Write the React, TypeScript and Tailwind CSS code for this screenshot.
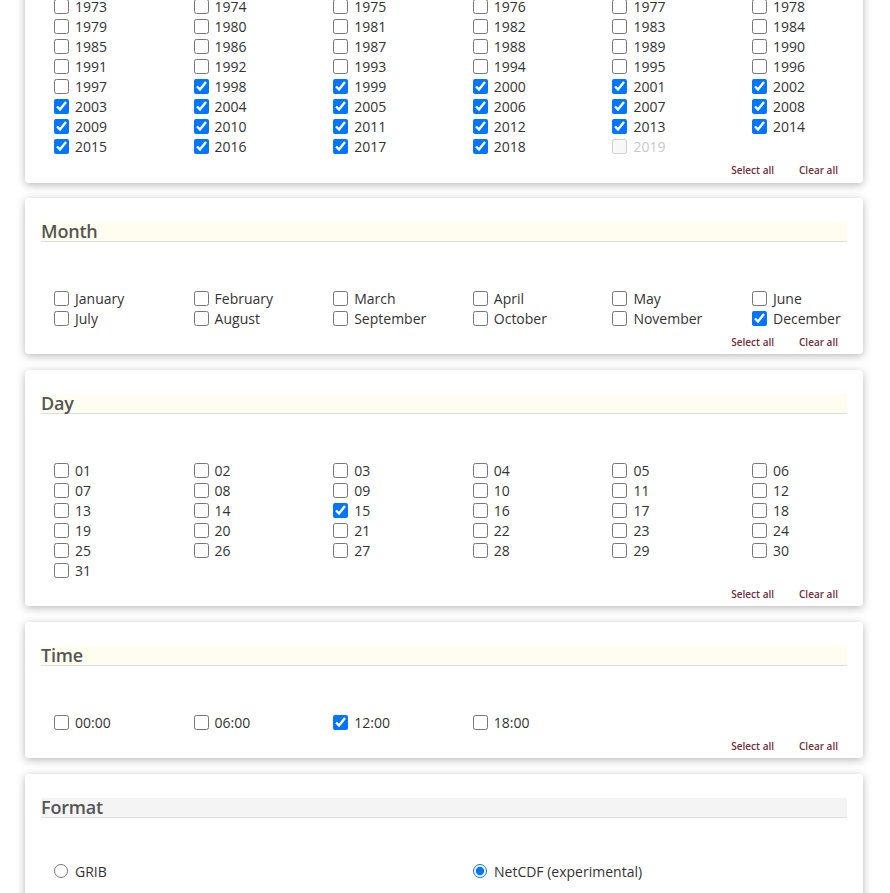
import React from 'react'

const YEARS = Array.from({ length: 2019 - 1973 + 1 }, (_, i) => 1973 + i)
const MONTHS = [
  'January',
  'February',
  'March',
  'April',
  'May',
  'June',
  'July',
  'August',
  'September',
  'October',
  'November',
  'December',
]
const DAYS = Array.from({ length: 31 }, (_, i) => String(i + 1).padStart(2, '0'))
const TIMES = ['00:00', '06:00', '12:00', '18:00']

type Item = { label: string; checked?: boolean; disabled?: boolean }

function CheckItem({ label, checked, disabled }: Item) {
  return (
    <label
      className={`flex items-center h-5 text-[14px] ${disabled ? 'text-[#c8c8c8]' : 'text-[#333]'}`}
    >
      <input
        type="checkbox"
        defaultChecked={checked}
        disabled={disabled}
        className="w-[15px] h-[15px] m-0 mr-[6px] shrink-0"
      />
      {label}
    </label>
  )
}

function CheckGrid({ items }: { items: Item[] }) {
  return (
    <div className="grid grid-cols-[repeat(5,139.6px)_1fr] pl-[13px]">
      {items.map((item) => (
        <CheckItem key={item.label} {...item} />
      ))}
    </div>
  )
}

function SelectLinks() {
  return (
    <div className="flex justify-end gap-[25px] pr-[9px] mt-[6px] h-4 items-center text-[10px] font-semibold text-[#6e2d3c]">
      <span>Select all</span>
      <span>Clear all</span>
    </div>
  )
}

function SectionHeader({ title, tone = 'yellow' }: { title: string; tone?: 'yellow' | 'gray' }) {
  return (
    <div
      className={`h-5 flex items-end border-b border-[#dcdcdc] ${tone === 'yellow' ? 'bg-[#fffdf0]' : 'bg-[#f4f4f4]'}`}
    >
      <h2 className="text-[18px] leading-[22px] font-semibold text-[#555] -mb-[1px] tracking-[-0.2px]">
        {title}
      </h2>
    </div>
  )
}

function Card({ children, className = '' }: { children: React.ReactNode; className?: string }) {
  return (
    <div
      className={`bg-white rounded-[4px] shadow-[0_2px_9px_rgba(0,0,0,0.28)] px-4 ${className}`}
    >
      {children}
    </div>
  )
}

export default function App() {
  const yearItems: Item[] = YEARS.map((y) => ({
    label: String(y),
    checked: y >= 1998 && y <= 2018,
    disabled: y === 2019,
  }))
  const monthItems: Item[] = MONTHS.map((m) => ({ label: m, checked: m === 'December' }))
  const dayItems: Item[] = DAYS.map((d) => ({ label: d, checked: d === '15' }))
  const timeItems: Item[] = TIMES.map((t) => ({ label: t, checked: t === '12:00' }))

  return (
    <div className="min-h-[893px] bg-white overflow-hidden font-['Open_Sans','Noto_Sans',sans-serif]">
      <div className="w-[838px] ml-[25px] flex flex-col pb-10">
        <Card className="-mt-[24px] pt-[20px] pb-[5px]">
          <CheckGrid items={yearItems} />
          <SelectLinks />
        </Card>

        <Card className="mt-[15px] pt-6 pb-1">
          <SectionHeader title="Month" />
          <div className="mt-[46px]">
            <CheckGrid items={monthItems} />
          </div>
          <SelectLinks />
        </Card>

        <Card className="mt-4 pt-6 pb-1">
          <SectionHeader title="Day" />
          <div className="mt-[46px]">
            <CheckGrid items={dayItems} />
          </div>
          <SelectLinks />
        </Card>

        <Card className="mt-4 pt-6 pb-1">
          <SectionHeader title="Time" />
          <div className="mt-[46px]">
            <CheckGrid items={timeItems} />
          </div>
          <SelectLinks />
        </Card>

        <Card className="mt-4 pt-6 pb-6">
          <SectionHeader title="Format" tone="gray" />
          <div className="mt-[43px] grid grid-cols-[419px_1fr] pl-[13px] text-[14px] text-[#333]">
            <label className="flex items-center h-5">
              <input type="radio" name="format" className="w-[14px] h-[14px] m-0 mr-[7px]" />
              GRIB
            </label>
            <label className="flex items-center h-5">
              <input
                type="radio"
                name="format"
                defaultChecked
                className="w-[14px] h-[14px] m-0 mr-[7px]"
              />
              NetCDF (experimental)
            </label>
          </div>
        </Card>
      </div>
    </div>
  )
}
